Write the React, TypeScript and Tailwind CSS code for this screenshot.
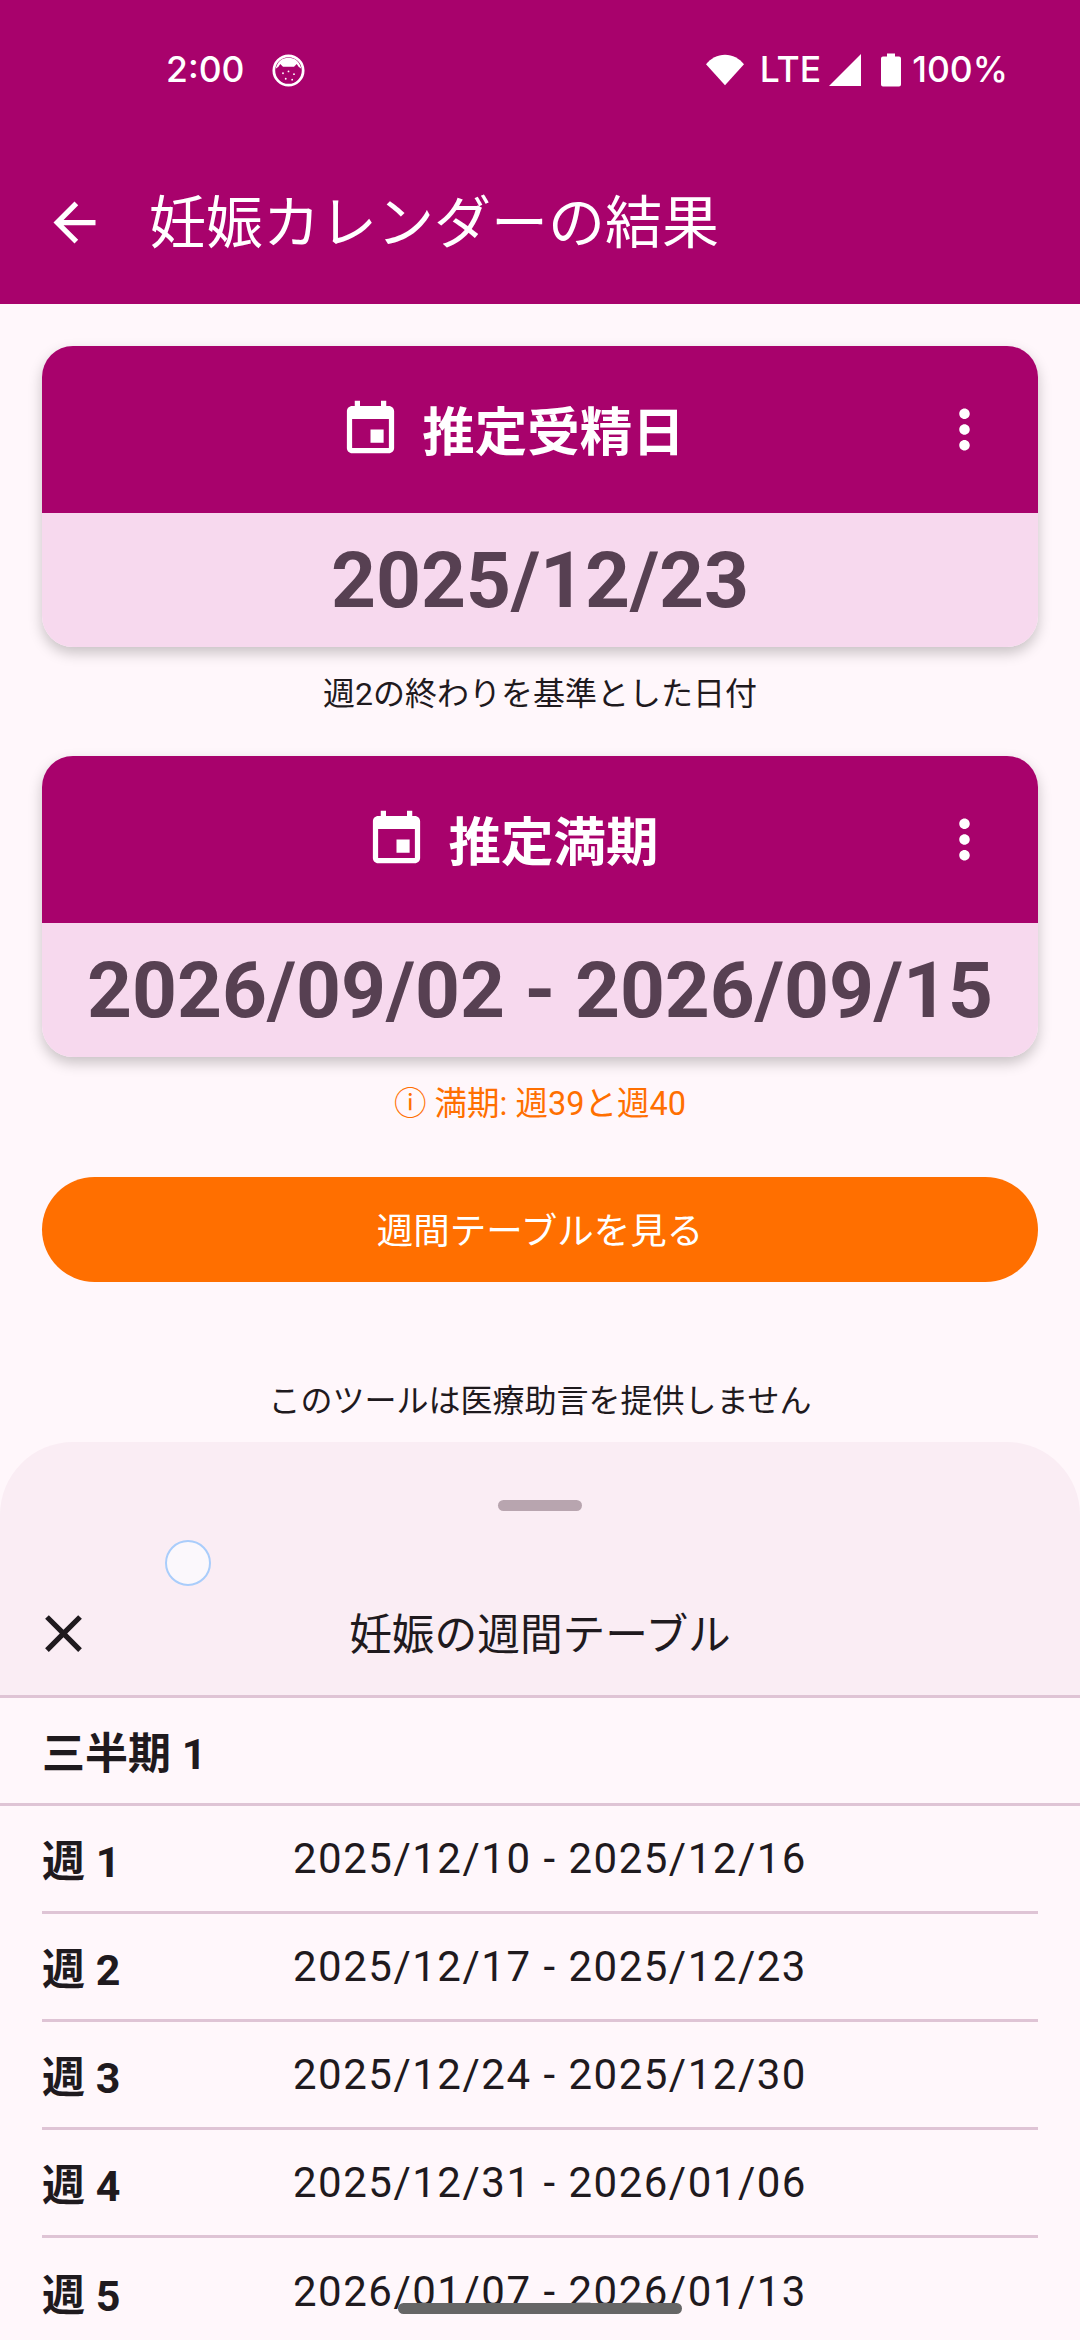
const weeks = [
  { label: '週 1', range: '2025/12/10 - 2025/12/16' },
  { label: '週 2', range: '2025/12/17 - 2025/12/23' },
  { label: '週 3', range: '2025/12/24 - 2025/12/30' },
  { label: '週 4', range: '2025/12/31 - 2026/01/06' },
  { label: '週 5', range: '2026/01/07 - 2026/01/13' },
];

function StatusBar() {
  return (
    <div className="flex h-[140px] items-center justify-between pl-[166px] pr-[72px] text-white [font-family:Inter,sans-serif] text-[35.5px] font-medium">
      <div className="flex items-center gap-[28px]">
        <span>2:00</span>
        <svg viewBox="0 0 36 36" className="w-[33px] h-[33px]">
          <circle cx="18" cy="18" r="16" fill="none" stroke="white" strokeWidth="3" />
          <path d="M4 16C6 8 11 4 18 4s12 4 14 12l-3-2-2-3-3 3h-12l-3-3-2 3z" fill="white" />
          <circle cx="12" cy="21" r="1" fill="white" />
          <circle cx="18" cy="19" r="1" fill="white" />
          <circle cx="24" cy="22" r="1" fill="white" />
          <circle cx="15" cy="27" r="1" fill="white" />
          <circle cx="22" cy="28" r="1" fill="white" />
        </svg>
      </div>
      <div className="flex items-center">
        <svg viewBox="0 0 40 32" className="w-[38px] h-[32px]">
          <path d="M0 10C5 4 12 0 20 0s15 4 20 10L20 32z" fill="white" />
        </svg>
        <span className="ml-[16px]">LTE</span>
        <svg viewBox="0 0 32 32" className="ml-[8px] w-[32px] h-[32px]">
          <path d="M32 0v32H0z" fill="white" />
        </svg>
        <svg viewBox="0 0 20 33" className="ml-[20px] w-[20px] h-[34px]">
          <path d="M6 0h8v3h4a2 2 0 0 1 2 2v26a2 2 0 0 1-2 2H2a2 2 0 0 1-2-2V5a2 2 0 0 1 2-2h4z" fill="white" />
        </svg>
        <span className="ml-[11px]">100%</span>
      </div>
    </div>
  );
}

function CalendarIcon() {
  return (
    <svg viewBox="0 0 24 24" fill="white" className="w-[63px] h-[63px] shrink-0">
      <path d="M17 12h-5v5h5v-5zM16 1v2H8V1H6v2H5c-1.11 0-1.99.9-1.99 2L3 19c0 1.1.89 2 2 2h14c1.1 0 2-.9 2-2V5c0-1.1-.9-2-2-2h-1V1h-2zm3 18H5V8h14v11z" />
    </svg>
  );
}

function DateCard({ title, value }: { title: string; value: string }) {
  return (
    <div className="mx-[42px] rounded-[31px] overflow-hidden shadow-[0_6px_14px_rgba(0,0,0,0.22)]">
      <div className="relative flex h-[167px] items-center justify-center gap-[20px] bg-[#a8026c] pr-[56px] text-white">
        <CalendarIcon />
        <span className="pt-[8px] text-[52.5px] font-bold leading-none">{title}</span>
        <svg viewBox="0 0 24 24" fill="white" className="absolute right-[42px] top-[52px] w-[63px] h-[63px]">
          <path d="M12 8c1.1 0 2-.9 2-2s-.9-2-2-2-2 .9-2 2 .9 2 2 2zm0 2c-1.1 0-2 .9-2 2s.9 2 2 2 2-.9 2-2-.9-2-2-2zm0 6c-1.1 0-2 .9-2 2s.9 2 2 2 2-.9 2-2-.9-2-2-2z" />
        </svg>
      </div>
      <div className="flex h-[134px] items-center justify-center bg-[#f7d9ee] text-[#574052] text-[78.4px] font-bold leading-none">
        {value}
      </div>
    </div>
  );
}

function WeekRow({ label, range, last }: { label: string; range: string; last?: boolean }) {
  return (
    <div className={`mx-[42px] flex h-[108px] items-center ${last ? '' : 'border-b-[3px] border-[#dfc4d5]'}`}>
      <span className="w-[251px] pt-[7px] text-[43px] font-bold leading-[50px]">{label}</span>
      <span className="text-[42px] leading-[50px] tracking-[1.5px]">{range}</span>
    </div>
  );
}

export default function App() {
  return (
    <div className="relative h-[2340px] w-[1080px] overflow-hidden bg-[#fff7fb] text-[#1f1a1e] [font-family:Roboto,'Noto_Sans_CJK_JP',sans-serif]">
      <div className="h-[304px] bg-[#a8026c] text-white">
        <StatusBar />
        <div className="flex h-[164px] items-center pl-[43px]">
          <svg viewBox="0 0 24 24" fill="white" className="w-[63px] h-[63px] shrink-0">
            <path d="M20 11H7.83l5.59-5.59L12 4l-8 8 8 8 1.41-1.41L7.83 13H20v-2z" />
          </svg>
          <span className="ml-[43px] pt-[2px] text-[57px] leading-none">妊娠カレンダーの結果</span>
        </div>
      </div>

      <div className="pt-[42px]">
        <DateCard title="推定受精日" value="2025/12/23" />
        <p className="mt-[27px] text-center text-[32px] leading-[40px]">週2の終わりを基準とした日付</p>
        <div className="mt-[42px]">
          <DateCard title="推定満期" value="2026/09/02 - 2026/09/15" />
        </div>
        <p className="mt-[27px] text-center text-[32.5px] leading-[40px] text-[#ff6f00]">ⓘ 満期: 週39と週40</p>
        <button className="mx-[42px] mt-[53px] flex h-[105px] w-[996px] items-center justify-center rounded-full bg-[#ff6f00] pt-[5px] text-[36.5px] text-white">
          週間テーブルを見る
        </button>
        <p className="mt-[99px] text-center text-[32px] leading-[40px]">このツールは医療助言を提供しません</p>
      </div>

      <div className="mt-[21px]">
        <div className="rounded-t-[73px] bg-[#faedf4] h-[253px]">
          <div className="flex justify-center pt-[58px]">
            <div className="h-[11px] w-[84px] rounded-full bg-[#b8a5af]" />
          </div>
          <div className="relative mt-[91px] flex h-[63px] items-center justify-center">
            <svg viewBox="0 0 24 24" fill="#1f1a1e" className="absolute left-[32px] top-0 w-[63px] h-[63px]">
              <path d="M19 6.41L17.59 5 12 10.59 6.41 5 5 6.41 10.59 12 5 17.59 6.41 19 12 13.41 17.59 19 19 17.59 13.41 12z" />
            </svg>
            <span className="pt-[3px] text-[42.7px] leading-none">妊娠の週間テーブル</span>
          </div>
        </div>
        <div className="h-[3px] bg-[#dfc4d5]" />
        <div className="flex h-[105px] items-center px-[42px] pt-[7px] text-[43px] font-bold leading-none">三半期 1</div>
        <div className="h-[3px] bg-[#dfc4d5]" />
        {weeks.map((w, i) => (
          <WeekRow key={w.label} label={w.label} range={w.range} last={i === weeks.length - 1} />
        ))}
      </div>

      {/* touch indicator left on the capture */}
      <div className="absolute left-[165px] top-[1540px] h-[46px] w-[46px] rounded-full border-2 border-[#a9cdfb] bg-[#fbf8fc]" />
      {/* gesture pill */}
      <div className="absolute left-[398px] top-[2303px] h-[11px] w-[284px] rounded-full bg-[#666666]" />
    </div>
  );
}
